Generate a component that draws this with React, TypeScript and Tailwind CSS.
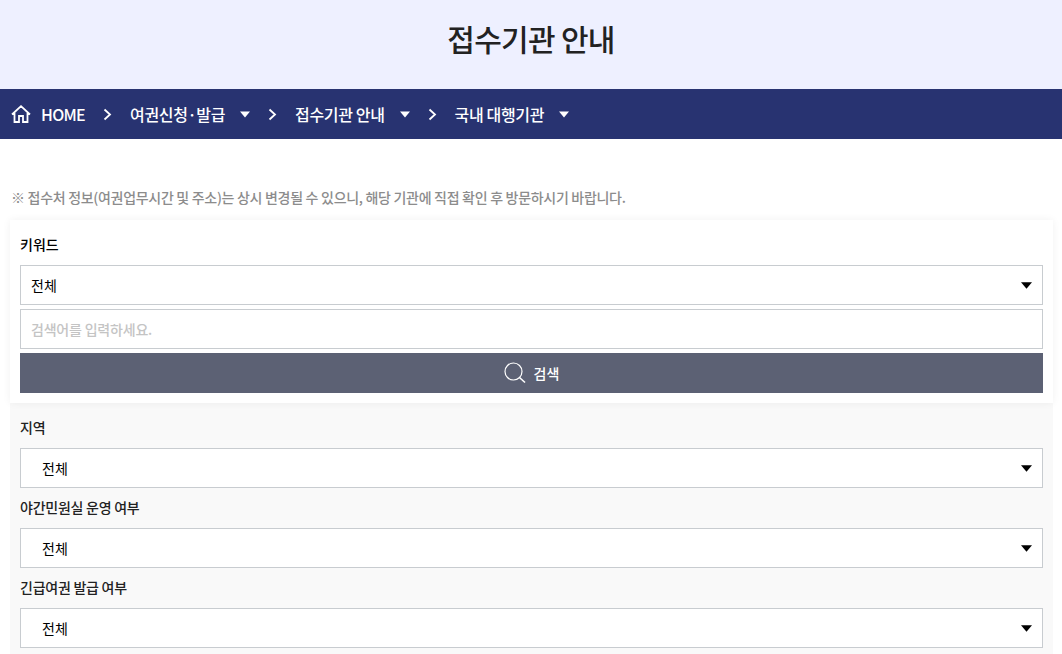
const crumbs = ['여권신청·발급', '접수기관 안내', '국내 대행기관']

const filters = ['지역', '야간민원실 운영 여부', '긴급여권 발급 여부']

function Caret({ className }: { className: string }) {
  return (
    <svg viewBox="0 0 10 6" className={className} fill="currentColor">
      <path d="M0 0h10L5 6z" />
    </svg>
  )
}

function SelectBox({ indent }: { indent: string }) {
  return (
    <div className={`flex h-10 items-center justify-between border border-[#c8ccd0] bg-white pr-[10px] ${indent}`}>
      <span className="text-sm text-black">전체</span>
      <Caret className="h-[7px] w-[11px] text-black" />
    </div>
  )
}

export default function App() {
  return (
    <div className="h-[654px] overflow-hidden bg-white font-['Noto_Sans_CJK_KR','Noto_Sans',sans-serif]">
      <header className="flex h-[89px] items-center justify-center bg-[#eef0ff] pb-[12px]">
        <h1 className="text-[30px] font-medium tracking-[-0.7px] text-[#222]">접수기관 안내</h1>
      </header>

      <nav className="flex h-[50px] items-center bg-[#283371] pl-[11px] text-base font-medium text-white">
        <svg viewBox="0 0 20 18" className="h-[18px] w-5" fill="none" stroke="currentColor" strokeWidth="1.800">
          <path d="M1 9.500 10 1.200l9 8.300M3.500 8V17h4.500v-6h4v6h4.500V8" />
        </svg>
        <span className="ml-[10px] tracking-[-0.7px]">HOME</span>
        {crumbs.map((label) => (
          <div key={label} className="flex items-center">
            <svg viewBox="0 0 9 13" className="mx-[18px] h-[13px] w-[9px]" fill="none" stroke="currentColor" strokeWidth="1.800">
              <path d="m1.500 1.500 5.500 5-5.500 5" />
            </svg>
            <span className="tracking-[-0.35px]">{label}</span>
            <Caret className="ml-[15px] h-[7px] w-[10px]" />
          </div>
        ))}
      </nav>

      <p className="mt-[48px] px-[11px] text-sm font-medium leading-[20px] tracking-[-0.3px] text-[#8c8c8c]">
        ※ 접수처 정보(여권업무시간 및 주소)는 상시 변경될 수 있으니, 해당 기관에 직접 확인 후 방문하시기 바랍니다.
      </p>

      <main className="ml-[10px] mr-[9px] mt-[13px] bg-[#f9f9f9] pb-5">
        <section className="bg-white px-[10px] pb-[10px] shadow-[0_0_8px_rgba(0,0,0,0.06)]">
          <div className="flex h-[45px] items-center pt-[2px] text-sm font-medium text-black">키워드</div>
          <SelectBox indent="pl-[10px]" />
          <div className="mt-1 flex h-10 items-center border border-[#c8ccd0] bg-white pl-[10px] text-sm font-medium tracking-[-0.2px] text-[#c4c4c4]">
            검색어를 입력하세요.
          </div>
          <button className="mt-1 flex h-10 w-full items-center justify-center gap-[8px] bg-[#5c6174] text-sm font-medium text-white">
            <svg viewBox="0 0 22 22" className="h-[22px] w-[22px]" fill="none" stroke="currentColor" strokeWidth="1.200">
              <circle cx="9.500" cy="9.500" r="8.500" />
              <path d="m15.500 15.500 5.500 5" strokeWidth="1.600" />
            </svg>
            검색
          </button>
        </section>
        <section className="px-[10px] pt-[5px]">
          {filters.map((label) => (
            <div key={label}>
              <div className="flex h-10 items-center pb-[2px] text-sm font-medium tracking-[-0.25px] text-[#222]">{label}</div>
              <SelectBox indent="pl-[21px]" />
            </div>
          ))}
        </section>
      </main>
    </div>
  )
}
